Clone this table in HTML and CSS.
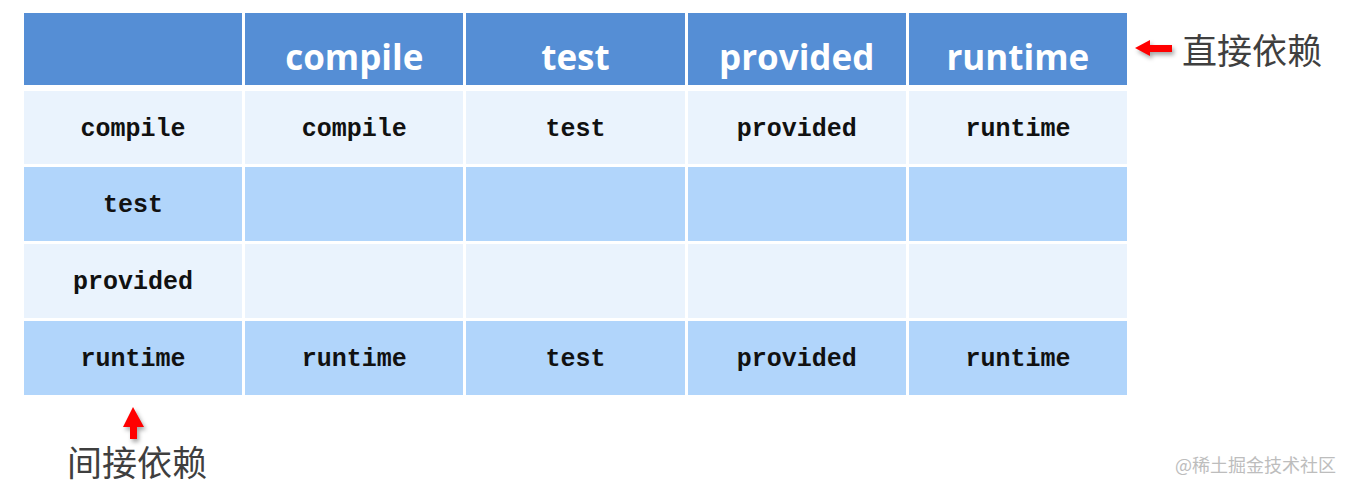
FILE: index.html
```html
<!DOCTYPE html>
<html lang="zh">
<head>
<meta charset="utf-8">
<title>依赖范围</title>
<link rel="stylesheet" href="styles.css">
</head>
<body>
<div class="page">
  <div class="top">
    <div class="table">
      <div class="thead">
        <div class="hcell"></div>
        <div class="hcell">compile</div>
        <div class="hcell">test</div>
        <div class="hcell">provided</div>
        <div class="hcell">runtime</div>
      </div>
      <div class="tbody">
        <div class="cell light">compile</div>
        <div class="cell light">compile</div>
        <div class="cell light">test</div>
        <div class="cell light">provided</div>
        <div class="cell light">runtime</div>

        <div class="cell dark">test</div>
        <div class="cell dark"></div>
        <div class="cell dark"></div>
        <div class="cell dark"></div>
        <div class="cell dark"></div>

        <div class="cell light">provided</div>
        <div class="cell light"></div>
        <div class="cell light"></div>
        <div class="cell light"></div>
        <div class="cell light"></div>

        <div class="cell dark">runtime</div>
        <div class="cell dark">runtime</div>
        <div class="cell dark">test</div>
        <div class="cell dark">provided</div>
        <div class="cell dark">runtime</div>
      </div>
    </div>
    <div class="side">
      <svg class="arrow-left" width="40" height="20" viewBox="0 0 40 20">
        <polygon points="1,9 16,1 16,6 38,6 38,13 16,13 16,17" fill="#ff0000"/>
      </svg>
      <span class="label">直接依赖</span>
    </div>
  </div>
  <div class="below">
    <svg class="arrow-up" width="24" height="34" viewBox="0 0 24 34">
      <polygon points="11,1 22,21 15,21 15,33 8,33 8,21 1,21" fill="#ff0000"/>
    </svg>
    <span class="label below-label">间接依赖</span>
  </div>
  <div class="watermark">@稀土掘金技术社区</div>
</div>
</body>
</html>
```

FILE: styles.css
```css
html, body {
  margin: 0;
  padding: 0;
  background: #ffffff;
}

.page {
  position: relative;
  width: 1352px;
  height: 489px;
  box-sizing: border-box;
  padding: 13px 0 0 24px;
  font-family: "Noto Sans CJK SC", sans-serif;
}

.top {
  display: flex;
  align-items: flex-start;
}

.table {
  width: 1103px;
}

.thead {
  display: grid;
  grid-template-columns: repeat(5, 1fr);
  column-gap: 3px;
  height: 72px;
}

.hcell {
  background: #558ed5;
  color: #ffffff;
  font-family: "Open Sans", sans-serif;
  font-weight: 700;
  font-size: 35px;
  display: flex;
  align-items: flex-end;
  justify-content: center;
  line-height: 1;
  padding-bottom: 11px;
}

.tbody {
  margin-top: 6px;
  display: grid;
  grid-template-columns: repeat(5, 1fr);
  grid-template-rows: 73px 74px 74px 74px;
  column-gap: 3px;
  row-gap: 3px;
}

.cell {
  display: flex;
  align-items: center;
  justify-content: center;
  padding-top: 3px;
  font-family: "Courier New", "Nimbus Mono PS", "Nimbus Mono L", "FreeMono", "Liberation Mono", monospace;
  font-weight: 700;
  font-size: 25px;
  color: #111111;
}

.light {
  background: #eaf3fd;
}

.dark {
  background: #b1d5fb;
}

.side {
  display: flex;
  align-items: center;
  margin-left: 7px;
  height: 72px;
}

.arrow-left {
  filter: drop-shadow(2px 3px 2px rgba(0, 0, 0, 0.35));
  margin-right: 8px;
}

.label {
  font-family: "Noto Sans CJK SC", sans-serif;
  font-size: 35px;
  color: #3f3f3f;
  line-height: 1;
}

.side .label {
  margin-top: -2px;
}

.below {
  display: flex;
  flex-direction: column;
  align-items: flex-start;
}

.arrow-up {
  margin: 11px 0 0 98px;
  filter: drop-shadow(2px 3px 2px rgba(0, 0, 0, 0.35));
}

.below-label {
  margin: 3px 0 0 43px;
}

.watermark {
  position: absolute;
  right: 16px;
  bottom: 16px;
  font-size: 18px;
  line-height: 1;
  color: #bdbdbd;
}
```
